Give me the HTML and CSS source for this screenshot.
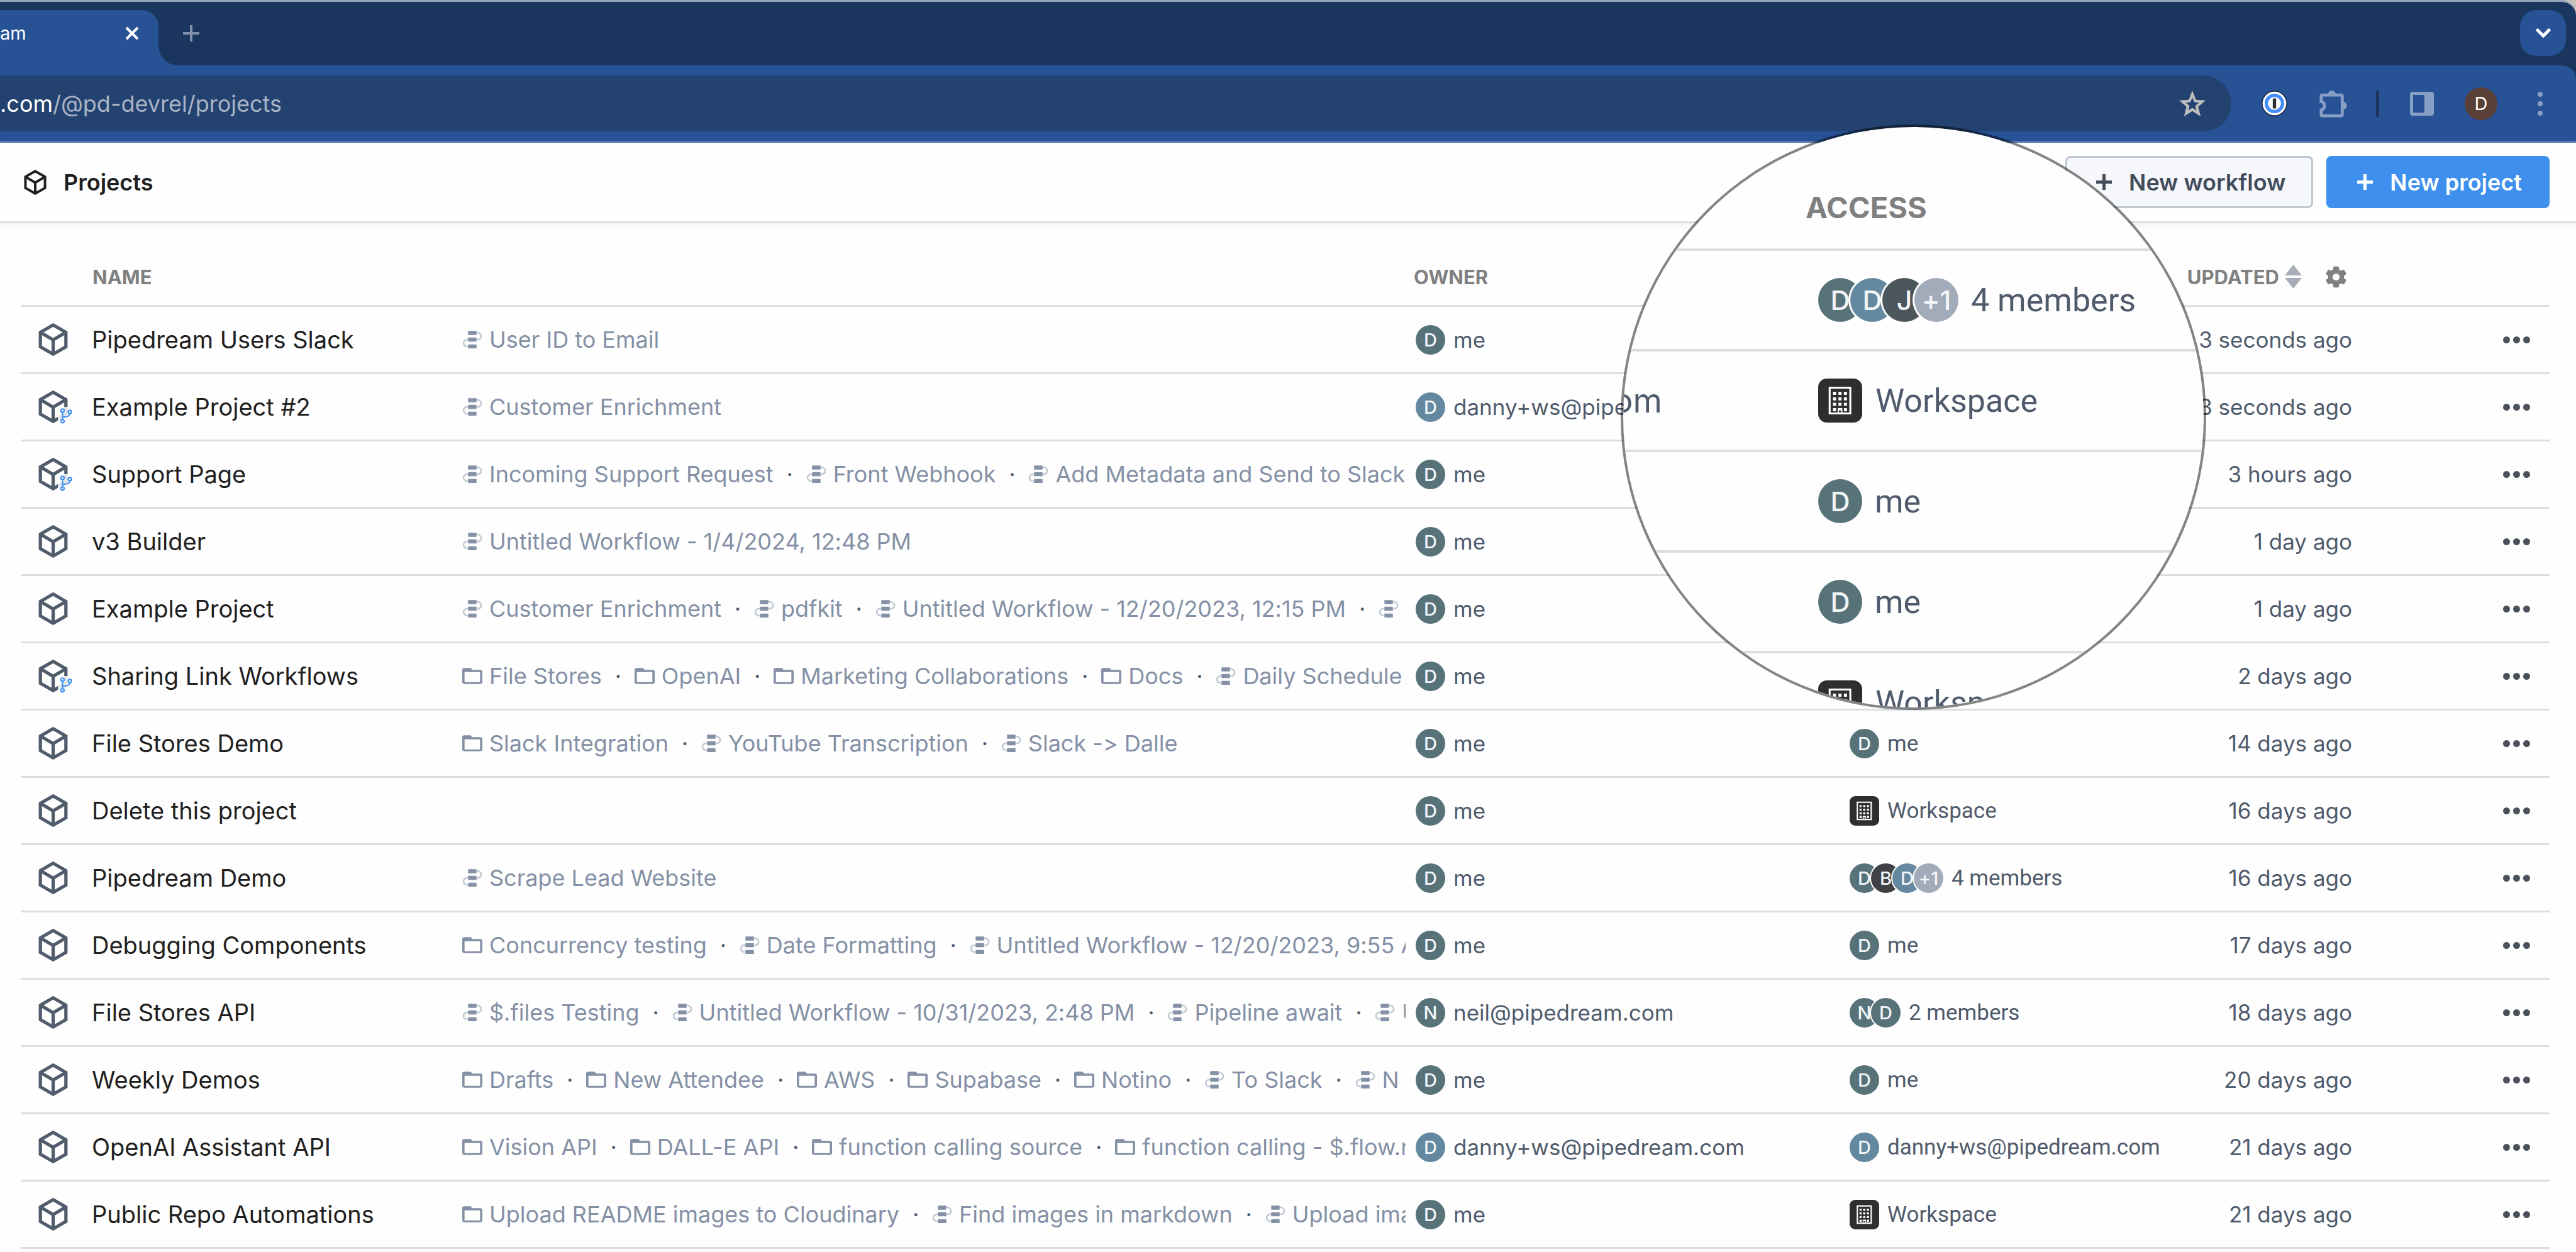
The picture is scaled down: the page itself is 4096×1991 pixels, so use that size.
FILE: index.html
```html
<!DOCTYPE html>
<html lang="en">
<head>
<meta charset="utf-8">
<title>Projects - Pipedream</title>
<link rel="stylesheet" href="styles.css">
</head>
<body>
<svg class="symbols" aria-hidden="true">
  <symbol id="cube" viewBox="0 0 47 52"><path d="M23.500 2.800 43.800 14.400V37.600L23.500 49.200 3.200 37.600V14.400ZM3.200 14.400 23.500 26.500 43.800 14.400M23.500 26.500V49" fill="none" stroke="currentColor" stroke-width="5.200"/></symbol>
  <symbol id="branch" viewBox="0 0 120 130"><g fill="none" stroke="#3d8eee" stroke-width="10"><path d="M34 38V94M34 78Q76 72 80 66Q86 60 88 50"/><circle cx="34" cy="27" r="12"/><circle cx="88" cy="37" r="12"/><circle cx="34" cy="106" r="12"/></g></symbol>
  <symbol id="flow" viewBox="0 0 49 47"><g fill="none" stroke="#c0c8d4" stroke-width="4"><path d="M35 6C50 6 51 24 36 24"/><path d="M14 23C-1 23 -1 41 13 41"/></g><path fill="#8490a5" d="M14 2h21v10H14zM14 18.500h21v10H14zM14 35.500h21v10H14z"/></symbol>
  <symbol id="folder" viewBox="0 0 48 38"><path fill="#8490a5" fill-rule="evenodd" d="M5 0H20L24 4.500H43Q48 4.500 48 9V33Q48 38 43 38H5Q0 38 0 33V5Q0 0 5 0ZM5.500 9.500V33.500H42.500V9.500Z"/></symbol>
  <symbol id="building" viewBox="0 0 113 113"><rect x="29.500" y="23.500" width="53" height="66" fill="none" stroke="#fff" stroke-width="5"/><path fill="#fff" d="M38 34h8v8h-8zM52 34h8v8h-8zM66 34h8v8h-8zM38 48h8v8h-8zM52 48h8v8h-8zM66 48h8v8h-8zM38 62h8v8h-8zM52 62h8v8h-8zM66 62h8v8h-8zM38 76h8v8h-8zM66 76h8v8h-8zM50 76h12v14h-3v-8h-6v8h-3z"/></symbol>
  <symbol id="plus" viewBox="0 0 25 25"><path d="M12.500 0V25M0 12.500H25" stroke="currentColor" stroke-width="5"/></symbol>
  <symbol id="more" viewBox="0 0 43 11"><g fill="#4b515b"><circle cx="5.500" cy="5.500" r="5.500"/><circle cx="21.500" cy="5.500" r="5.500"/><circle cx="37.500" cy="5.500" r="5.500"/></g></symbol>
</svg>

<header class="browser">
  <div class="tab-strip">
    <div class="tab">
      <span class="tab-title">am</span>
      <button class="tab-close" aria-label="Close tab"><svg viewBox="0 0 22 22" width="22" height="22"><path d="M2 2 20 20M20 2 2 20" stroke="#fff" stroke-width="4"/></svg></button>
    </div>
    <button class="new-tab" aria-label="New tab"><svg viewBox="0 0 26 26" width="26" height="26"><path d="M13 0V26M0 13H26" stroke="#8292ad" stroke-width="4"/></svg></button>
    <button class="tab-search" aria-label="Search tabs"><svg viewBox="0 0 24 16" width="24" height="16"><path d="M3 3 12 12 21 3" fill="none" stroke="#fff" stroke-width="5" stroke-linecap="round"/></svg></button>
  </div>
  <div class="toolbar">
    <div class="omnibox">
      <span class="url"><span class="domain">.com</span>/@pd-devrel/projects</span>
      <button class="star" aria-label="Bookmark this tab"><svg viewBox="0 0 42 41" width="42" height="41"><path fill="#bdbdbd" fill-rule="evenodd" d="M21 0 26.700 14.700 42 15.700 30.400 25.700 34.200 41 21 32.800 7.800 41 11.600 25.700 0 15.700 15.300 14.700ZM21 11 18 18.500 10.500 19.200 16.500 24.200 14.600 31.500 21 27.500 27.400 31.500 25.500 24.200 31.500 19.200 24 18.500Z"/></svg></button>
    </div>
    <nav class="extensions" aria-label="Browser tools">
      <button aria-label="Password manager"><svg viewBox="0 0 62 62" width="41" height="41"><circle cx="31" cy="31" r="31" fill="#1b2c48"/><circle cx="31" cy="31" r="28.500" fill="#fff"/><circle cx="31" cy="31" r="19.500" fill="none" stroke="#448dfa" stroke-width="8"/><path d="M27 19h8v24h-8z" fill="#2e2e2e"/></svg></button>
      <button aria-label="Extensions"><svg viewBox="0 0 200 200" width="44" height="44"><path d="M13 85V46Q13 37 22 37H156Q165 37 165 46V178Q165 187 156 187H22Q13 187 13 178V145C45 142 45 88 13 85Z" fill="none" stroke="#879ec5" stroke-width="22"/><path d="M62 32a28 28 0 0 1 56 0M170 85a28 28 0 0 1 0 58" fill="#879ec5"/></svg></button>
      <span class="divider"></span>
      <button aria-label="Side panel"><svg viewBox="0 0 38 38" width="38" height="38"><path fill="#879ec5" fill-rule="evenodd" d="M4 0H34Q38 0 38 4V34Q38 38 34 38H4Q0 38 0 34V4Q0 0 4 0ZM5 5V33H23V5Z"/></svg></button>
      <button aria-label="Profile"><span class="profile">D</span></button>
      <button aria-label="Browser menu"><svg viewBox="0 0 8 38" width="8" height="38"><g fill="#879ec5"><circle cx="4" cy="4" r="4"/><circle cx="4" cy="19" r="4"/><circle cx="4" cy="34" r="4"/></g></svg></button>
    </nav>
  </div>
</header>

<div class="page-header">
  <svg class="title-cube"><use href="#cube"/></svg>
  <h1>Projects</h1>
  <div class="actions">
    <button class="btn"><svg class="plus"><use href="#plus"/></svg>New workflow</button>
    <button class="btn primary"><svg class="plus"><use href="#plus"/></svg>New project</button>
  </div>
</div>

<main>
<table>
  <colgroup><col class="c-name"><col><col class="c-owner"><col class="c-access"><col class="c-updated"><col class="c-more"></colgroup>
  <thead>
    <tr>
      <th class="h-name">NAME</th>
      <th aria-label="Contents"></th>
      <th>OWNER</th>
      <th aria-label="Shared with"></th>
      <th><div class="h-updated">UPDATED
        <button class="sort" aria-label="Sort by updated"><svg viewBox="0 0 27 38" width="27" height="38"><path fill="#a8adb7" d="M13.500 0 27 17H0ZM0 21H27L13.500 38Z"/></svg></button>
        <button class="gear" aria-label="Table settings"><svg viewBox="2 2 20 20" width="35" height="35"><path fill="#808080" d="M19.140 12.940c.04-.3.060-.61.060-.94s-.02-.64-.07-.94l2.030-1.580a.49.49 0 0 0 .12-.61l-1.920-3.320a.49.49 0 0 0-.59-.22l-2.390.96a7 7 0 0 0-1.620-.94l-.36-2.540A.48.480 0 0 0 13.920 2.400h-3.840a.48.480 0 0 0-.47.410l-.36 2.540c-.59.240-1.130.57-1.620.94l-2.390-.96a.49.490 0 0 0-.59.220L2.740 8.870a.48.480 0 0 0 .12.610l2.030 1.580c-.05.300-.09.630-.09.940s.020.640.070.940l-2.030 1.580a.49.490 0 0 0-.12.610l1.920 3.320c.12.220.37.290.59.220l2.390-.96c.5.380 1.030.7 1.620.94l.36 2.540c.05.240.24.410.480.410h3.840c.24 0 .44-.17.470-.41l.36-2.540c.59-.24 1.130-.56 1.620-.94l2.390.96c.22.080.47 0 .59-.22l1.920-3.320a.48.480 0 0 0-.12-.61ZM12 15.200a3.200 3.200 0 1 1 0-6.400 3.200 3.200 0 0 1 0 6.400Z"/></svg></button>
      </div></th>
      <th aria-label="Actions"></th>
    </tr>
  </thead>
  <tbody>
    <tr>
      <td><div class="name"><svg class="cube"><use href="#cube"/></svg><span>Pipedream Users Slack</span></div></td>
      <td><div class="items"><svg class="ico"><use href="#flow"/></svg><span>User ID to Email</span></div></td>
      <td><div class="who"><i class="av">D</i>me</div></td>
      <td></td>
      <td class="when">3 seconds ago</td>
      <td><button class="more" aria-label="More"><svg><use href="#more"/></svg></button></td>
    </tr>
    <tr>
      <td><div class="name"><svg class="cube"><use href="#cube"/></svg><svg class="branch"><use href="#branch"/></svg><span>Example Project #2</span></div></td>
      <td><div class="items"><svg class="ico"><use href="#flow"/></svg><span>Customer Enrichment</span></div></td>
      <td><div class="who"><i class="av blue">D</i>danny+ws@pipedream.com</div></td>
      <td></td>
      <td class="when">3 seconds ago</td>
      <td><button class="more" aria-label="More"><svg><use href="#more"/></svg></button></td>
    </tr>
    <tr>
      <td><div class="name"><svg class="cube"><use href="#cube"/></svg><svg class="branch"><use href="#branch"/></svg><span>Support Page</span></div></td>
      <td><div class="items"><svg class="ico"><use href="#flow"/></svg><span>Incoming Support Request</span><b>·</b><svg class="ico"><use href="#flow"/></svg><span>Front Webhook</span><b>·</b><svg class="ico"><use href="#flow"/></svg><span>Add Metadata and Send to Slack</span></div></td>
      <td><div class="who"><i class="av">D</i>me</div></td>
      <td></td>
      <td class="when">3 hours ago</td>
      <td><button class="more" aria-label="More"><svg><use href="#more"/></svg></button></td>
    </tr>
    <tr>
      <td><div class="name"><svg class="cube"><use href="#cube"/></svg><span>v3 Builder</span></div></td>
      <td><div class="items"><svg class="ico"><use href="#flow"/></svg><span>Untitled Workflow - 1/4/2024, 12:48 PM</span></div></td>
      <td><div class="who"><i class="av">D</i>me</div></td>
      <td></td>
      <td class="when">1 day ago</td>
      <td><button class="more" aria-label="More"><svg><use href="#more"/></svg></button></td>
    </tr>
    <tr>
      <td><div class="name"><svg class="cube"><use href="#cube"/></svg><span>Example Project</span></div></td>
      <td><div class="items"><svg class="ico"><use href="#flow"/></svg><span>Customer Enrichment</span><b>·</b><svg class="ico"><use href="#flow"/></svg><span>pdfkit</span><b>·</b><svg class="ico"><use href="#flow"/></svg><span>Untitled Workflow - 12/20/2023, 12:15 PM</span><b>·</b><svg class="ico"><use href="#flow"/></svg></div></td>
      <td><div class="who"><i class="av">D</i>me</div></td>
      <td></td>
      <td class="when">1 day ago</td>
      <td><button class="more" aria-label="More"><svg><use href="#more"/></svg></button></td>
    </tr>
    <tr>
      <td><div class="name"><svg class="cube"><use href="#cube"/></svg><svg class="branch"><use href="#branch"/></svg><span>Sharing Link Workflows</span></div></td>
      <td><div class="items"><svg class="ico"><use href="#folder"/></svg><span>File Stores</span><b>·</b><svg class="ico"><use href="#folder"/></svg><span>OpenAI</span><b>·</b><svg class="ico"><use href="#folder"/></svg><span>Marketing Collaborations</span><b>·</b><svg class="ico"><use href="#folder"/></svg><span>Docs</span><b>·</b><svg class="ico"><use href="#flow"/></svg><span>Daily Schedule</span></div></td>
      <td><div class="who"><i class="av">D</i>me</div></td>
      <td></td>
      <td class="when">2 days ago</td>
      <td><button class="more" aria-label="More"><svg><use href="#more"/></svg></button></td>
    </tr>
    <tr>
      <td><div class="name"><svg class="cube"><use href="#cube"/></svg><span>File Stores Demo</span></div></td>
      <td><div class="items"><svg class="ico"><use href="#folder"/></svg><span>Slack Integration</span><b>·</b><svg class="ico"><use href="#flow"/></svg><span>YouTube Transcription</span><b>·</b><svg class="ico"><use href="#flow"/></svg><span>Slack -&gt; Dalle</span></div></td>
      <td><div class="who"><i class="av">D</i>me</div></td>
      <td><div class="who access"><i class="av">D</i>me</div></td>
      <td class="when">14 days ago</td>
      <td><button class="more" aria-label="More"><svg><use href="#more"/></svg></button></td>
    </tr>
    <tr>
      <td><div class="name"><svg class="cube"><use href="#cube"/></svg><span>Delete this project</span></div></td>
      <td></td>
      <td><div class="who"><i class="av">D</i>me</div></td>
      <td><div class="who access"><svg class="ws"><use href="#building"/></svg>Workspace</div></td>
      <td class="when">16 days ago</td>
      <td><button class="more" aria-label="More"><svg><use href="#more"/></svg></button></td>
    </tr>
    <tr>
      <td><div class="name"><svg class="cube"><use href="#cube"/></svg><span>Pipedream Demo</span></div></td>
      <td><div class="items"><svg class="ico"><use href="#flow"/></svg><span>Scrape Lead Website</span></div></td>
      <td><div class="who"><i class="av">D</i>me</div></td>
      <td><div class="who access"><i class="av">D</i><i class="av dark">B</i><i class="av blue">D</i><i class="av rest">+1</i>4 members</div></td>
      <td class="when">16 days ago</td>
      <td><button class="more" aria-label="More"><svg><use href="#more"/></svg></button></td>
    </tr>
    <tr>
      <td><div class="name"><svg class="cube"><use href="#cube"/></svg><span>Debugging Components</span></div></td>
      <td><div class="items"><svg class="ico"><use href="#folder"/></svg><span>Concurrency testing</span><b>·</b><svg class="ico"><use href="#flow"/></svg><span>Date Formatting</span><b>·</b><svg class="ico"><use href="#flow"/></svg><span>Untitled Workflow - 12/20/2023, 9:55 A</span></div></td>
      <td><div class="who"><i class="av">D</i>me</div></td>
      <td><div class="who access"><i class="av">D</i>me</div></td>
      <td class="when">17 days ago</td>
      <td><button class="more" aria-label="More"><svg><use href="#more"/></svg></button></td>
    </tr>
    <tr>
      <td><div class="name"><svg class="cube"><use href="#cube"/></svg><span>File Stores API</span></div></td>
      <td><div class="items"><svg class="ico"><use href="#flow"/></svg><span>$.files Testing</span><b>·</b><svg class="ico"><use href="#flow"/></svg><span>Untitled Workflow - 10/31/2023, 2:48 PM</span><b>·</b><svg class="ico"><use href="#flow"/></svg><span>Pipeline await</span><b>·</b><svg class="ico"><use href="#flow"/></svg><span>U</span></div></td>
      <td><div class="who"><i class="av">N</i>neil@pipedream.com</div></td>
      <td><div class="who access"><i class="av">N</i><i class="av">D</i>2 members</div></td>
      <td class="when">18 days ago</td>
      <td><button class="more" aria-label="More"><svg><use href="#more"/></svg></button></td>
    </tr>
    <tr>
      <td><div class="name"><svg class="cube"><use href="#cube"/></svg><span>Weekly Demos</span></div></td>
      <td><div class="items"><svg class="ico"><use href="#folder"/></svg><span>Drafts</span><b>·</b><svg class="ico"><use href="#folder"/></svg><span>New Attendee</span><b>·</b><svg class="ico"><use href="#folder"/></svg><span>AWS</span><b>·</b><svg class="ico"><use href="#folder"/></svg><span>Supabase</span><b>·</b><svg class="ico"><use href="#folder"/></svg><span>Notino</span><b>·</b><svg class="ico"><use href="#flow"/></svg><span>To Slack</span><b>·</b><svg class="ico"><use href="#flow"/></svg><span>N</span></div></td>
      <td><div class="who"><i class="av">D</i>me</div></td>
      <td><div class="who access"><i class="av">D</i>me</div></td>
      <td class="when">20 days ago</td>
      <td><button class="more" aria-label="More"><svg><use href="#more"/></svg></button></td>
    </tr>
    <tr>
      <td><div class="name"><svg class="cube"><use href="#cube"/></svg><span>OpenAI Assistant API</span></div></td>
      <td><div class="items"><svg class="ico"><use href="#folder"/></svg><span>Vision API</span><b>·</b><svg class="ico"><use href="#folder"/></svg><span>DALL-E API</span><b>·</b><svg class="ico"><use href="#folder"/></svg><span>function calling source</span><b>·</b><svg class="ico"><use href="#folder"/></svg><span>function calling - $.flow.r</span></div></td>
      <td><div class="who"><i class="av blue">D</i>danny+ws@pipedream.com</div></td>
      <td><div class="who access"><i class="av blue">D</i>danny+ws@pipedream.com</div></td>
      <td class="when">21 days ago</td>
      <td><button class="more" aria-label="More"><svg><use href="#more"/></svg></button></td>
    </tr>
    <tr>
      <td><div class="name"><svg class="cube"><use href="#cube"/></svg><span>Public Repo Automations</span></div></td>
      <td><div class="items"><svg class="ico"><use href="#folder"/></svg><span>Upload README images to Cloudinary</span><b>·</b><svg class="ico"><use href="#flow"/></svg><span>Find images in markdown</span><b>·</b><svg class="ico"><use href="#flow"/></svg><span>Upload ima</span></div></td>
      <td><div class="who"><i class="av">D</i>me</div></td>
      <td><div class="who access"><svg class="ws"><use href="#building"/></svg>Workspace</div></td>
      <td class="when">21 days ago</td>
      <td><button class="more" aria-label="More"><svg><use href="#more"/></svg></button></td>
    </tr>
  </tbody>
</table>
</main>

<aside class="lens" aria-label="Access column, enlarged">
  <div class="lens-head">ACCESS</div>
  <div class="lens-row"><span class="lens-owner"></span><div class="who access"><i class="av">D</i><i class="av blue">D</i><i class="av slate">J</i><i class="av rest">+1</i>4 members</div></div>
  <div class="lens-row"><span class="lens-owner">om</span><div class="who access"><svg class="ws"><use href="#building"/></svg>Workspace</div></div>
  <div class="lens-row"><span class="lens-owner"></span><div class="who access"><i class="av">D</i>me</div></div>
  <div class="lens-row"><span class="lens-owner"></span><div class="who access"><i class="av">D</i>me</div></div>
  <div class="lens-row"><span class="lens-owner"></span><div class="who access"><svg class="ws"><use href="#building"/></svg>Workspace</div></div>
</aside>
</body>
</html>
```

FILE: styles.css
```css
* { box-sizing: border-box; }

body {
  position: relative;
  margin: 0;
  background: #fefefe;
  color: #4f5b6c;
  font-family: Inter, "Liberation Sans", sans-serif;
  font-size: 35px;
  font-variant-ligatures: no-contextual;
  overflow-x: hidden;
}

button {
  display: flex;
  align-items: center;
  justify-content: center;
  padding: 0;
  border: 0;
  background: none;
  color: inherit;
  font: inherit;
  cursor: pointer;
}

svg { display: block; flex: none; }
.symbols { position: absolute; width: 0; height: 0; }

/* Browser chrome */
.browser { background: linear-gradient(#c8c0ba 0 104px, #1a355e 104px); }

.tab-strip {
  display: flex;
  align-items: flex-start;
  height: 104px;
  padding: 13px 16px 0 0;
  border-top: 3px solid #93a3b9;
  border-top-right-radius: 24px;
  background: #1a355e;
}

.tab {
  position: relative;
  display: flex;
  align-items: center;
  justify-content: space-between;
  width: 252px;
  height: 88px;
  padding: 0 31px 15px 0;
  border-top-right-radius: 26px;
  background: #275295;
  color: #fff;
  font-size: 29px;
}

.tab::after {
  content: "";
  position: absolute;
  left: 100%;
  bottom: 0;
  width: 30px;
  height: 30px;
  background: radial-gradient(circle at 100% 0, transparent 29px, #275295 30px);
}

.new-tab { width: 104px; height: 73px; }

.tab-search {
  width: 73px;
  height: 73px;
  margin-left: auto;
  border-radius: 26px;
  background: #275295;
}

.toolbar {
  display: flex;
  padding: 16px 10px 15px 0;
  border-bottom: 3px solid #5579ad;
  border-top-right-radius: 22px;
  background: #275295;
}

.omnibox {
  display: flex;
  flex: 1;
  align-items: center;
  justify-content: space-between;
  height: 89px;
  margin-right: 21px;
  padding-right: 41px;
  border-radius: 0 45px 45px 0;
  background: #244270;
}

.url { color: #a9b5c7; font-size: 36px; }
.domain { color: #fff; }

.extensions { display: flex; align-items: center; }
.extensions button { width: 94px; height: 89px; }
.divider { width: 5px; height: 42px; margin: 0 21px; border-radius: 2px; background: #1a355e; }

.profile {
  width: 52px;
  height: 52px;
  border-radius: 50%;
  background: #5b4038;
  color: #fff;
  font-size: 29px;
  line-height: 52px;
}

/* Page header */
.page-header {
  display: flex;
  align-items: center;
  height: 128px;
  padding: 0 42px 0 38px;
  border-bottom: 3px solid #dadee2;
  box-shadow: 0 3px 10px rgba(0, 0, 0, 0.05);
}

.title-cube { width: 36px; height: 40px; color: #202020; }

h1 {
  margin: 0 0 0 27px;
  color: #202020;
  font-size: 36px;
  font-weight: 600;
}

.actions { display: flex; gap: 21px; margin-left: auto; }

.btn {
  gap: 27px;
  height: 83px;
  padding: 0 41px 0 46px;
  border: 3px solid #bfc7d1;
  border-radius: 8px;
  background: #f5f7fa;
  color: #424c5a;
  font-size: 36px;
  font-weight: 600;
}

.btn.primary { border-color: #3e8fee; background: #3e8fee; color: #fff; }
.plus { width: 25px; height: 25px; }

/* Projects table */
main { padding: 40px 42px 0 33px; }

table {
  width: 100%;
  border-spacing: 0;
  table-layout: fixed;
}

.c-name { width: 702px; }
.c-owner { width: 690px; }
.c-access { width: 502px; }
.c-updated { width: 300px; }
.c-more { width: 314px; }

th, td {
  padding: 0;
  border-bottom: 3px solid #dadee3;
  text-align: left;
}

th { height: 93px; color: #808080; font-size: 31px; font-weight: 700; }
td { height: 107px; }
.h-name { padding-left: 114px; }
.h-updated { display: flex; align-items: center; justify-content: flex-end; padding-right: 8px; }
.sort { margin: 0 37px 0 9px; }

.name {
  position: relative;
  display: flex;
  align-items: center;
  gap: 38px;
  padding-left: 28px;
  color: #202020;
  font-size: 38px;
}

.cube { width: 47px; height: 52px; color: #505c6b; }

.branch {
  position: absolute;
  left: 59px;
  top: 50%;
  width: 26px;
  height: 28px;
  background: rgba(254, 254, 254, 0.84);
}

.items {
  display: flex;
  align-items: center;
  margin-right: 13px;
  overflow: hidden;
  color: #8490a5;
  font-size: 36px;
  white-space: nowrap;
}

.ico { width: 32px; height: 30px; margin-right: 11px; }
.items b { flex: none; width: 52px; color: #4f5b6c; font-weight: 400; text-align: center; }

.who {
  display: flex;
  align-items: center;
  padding-left: 3px;
  white-space: nowrap;
}

.access { font-family: Roboto, Inter, sans-serif; }

.av {
  flex: none;
  width: 47px;
  height: 47px;
  margin-right: 13px;
  border-radius: 50%;
  background: #577279;
  color: #f2f5f7;
  font-family: Inter, "Liberation Sans", sans-serif;
  font-size: 29px;
  font-style: normal;
  font-weight: 500;
  line-height: 47px;
  text-align: center;
}

.av + .av { margin-left: -26px; box-shadow: 0 0 0 2px #fefefe; }
.blue { background: #63889f; }
.dark { background: #3f4145; }
.slate { background: #4b565d; }
.rest { background: #a2abb9; }

.ws {
  width: 47px;
  height: 47px;
  margin-right: 13px;
  border-radius: 9px;
  background: #2e2e2e;
}

.when { text-align: right; }
.more { margin-left: auto; padding: 20px 31px; }
.more svg { width: 43px; height: 11px; }

/* Magnifying lens over the access column */
.lens {
  position: absolute;
  top: 198px;
  right: 588px;
  width: 931px;
  height: 931px;
  border: 4px solid rgba(0, 0, 0, 0.48);
  border-radius: 50%;
  background: #fefefe;
  background-clip: padding-box;
  overflow: hidden;
  font-size: 53px;
}

.lens-head {
  height: 197px;
  padding: 100px 0 0 290px;
  border-bottom: 4px solid #dadee3;
  color: #808080;
  font-size: 47px;
  font-weight: 700;
  line-height: 56px;
}

.lens-row {
  display: flex;
  align-items: center;
  gap: 245px;
  height: 160px;
  border-bottom: 4px solid #dadee3;
}

.lens-owner { display: flex; justify-content: flex-end; width: 62px; }
.lens .access { font-size: 52px; }
.lens .av { width: 70px; height: 70px; margin-right: 20px; font-size: 43px; line-height: 70px; }
.lens .av + .av { margin-left: -39px; box-shadow: 0 0 0 3px #fefefe; }
.lens .ws { width: 70px; height: 70px; margin-right: 21px; border-radius: 14px; }
```
